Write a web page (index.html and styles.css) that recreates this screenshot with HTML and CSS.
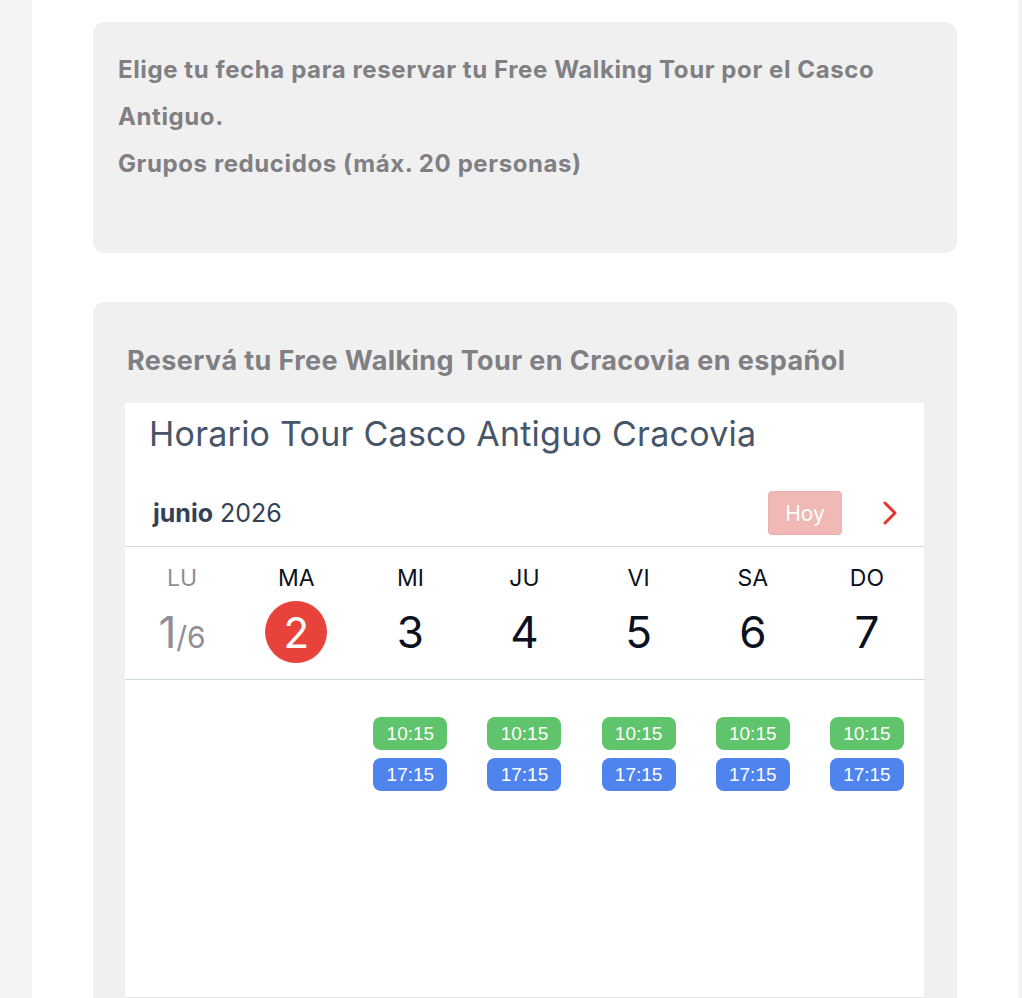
FILE: index.html
```html
<!DOCTYPE html>
<html lang="es">

<head>
  <meta charset="utf-8">
  <title>Free Walking Tour Cracovia - Reservar</title>
  <link rel="stylesheet" href="styles.css">
</head>

<body>
  <main class="page">
    <section class="card intro">
      <p>Elige tu fecha para reservar tu Free Walking Tour por el Casco Antiguo.<br>
        Grupos reducidos (máx. 20 personas)</p>
    </section>

    <section class="card booking">
      <h2>Reservá tu Free Walking Tour en Cracovia en español</h2>
      <div class="calendar">
        <h3>Horario Tour Casco Antiguo Cracovia</h3>
        <div class="toolbar">
          <div class="month"><strong>junio</strong> 2026</div>
          <button type="button" class="today">Hoy</button>
          <button type="button" class="next" aria-label="Siguiente">
            <svg width="16" height="26" viewBox="0 0 16 26"><path d="M3 3l10 10L3 23" fill="none" stroke="#e0372b" stroke-width="3" stroke-linecap="round" stroke-linejoin="round"/></svg>
          </button>
        </div>
        <div class="days">
          <div class="day past"><span class="name">LU</span><span class="num">1<small>/6</small></span></div>
          <div class="day today-day"><span class="name">MA</span><span class="num"><b>2</b></span></div>
          <div class="day"><span class="name">MI</span><span class="num">3</span></div>
          <div class="day"><span class="name">JU</span><span class="num">4</span></div>
          <div class="day"><span class="name">VI</span><span class="num">5</span></div>
          <div class="day"><span class="name">SA</span><span class="num">6</span></div>
          <div class="day"><span class="name">DO</span><span class="num">7</span></div>
        </div>
        <div class="slots">
          <div class="col"></div>
          <div class="col"></div>
          <div class="col"><a class="slot morning">10:15</a><a class="slot evening">17:15</a></div>
          <div class="col"><a class="slot morning">10:15</a><a class="slot evening">17:15</a></div>
          <div class="col"><a class="slot morning">10:15</a><a class="slot evening">17:15</a></div>
          <div class="col"><a class="slot morning">10:15</a><a class="slot evening">17:15</a></div>
          <div class="col"><a class="slot morning">10:15</a><a class="slot evening">17:15</a></div>
        </div>
      </div>
    </section>
  </main>
</body>

</html>
```

FILE: styles.css
```css
*, *::before, *::after {
  box-sizing: border-box;
}
body {
  margin: 0;
  background: #f4f4f4;
  font-family: Inter, 'Noto Sans', sans-serif;
}
.page {
  margin-left: 32px;
  width: 986px;
  height: 998px;
  background: white;
  padding: 22px 61px 0;
  overflow: hidden;
}

.card {
  background: #f0f0f0;
  border-radius: 12px;
}
.intro {
  padding: 24px 25px 66px;
}
.intro p {
  margin: 0;
  color: #808084;
  font-size: 24px;
  letter-spacing: 0.6px;
  font-weight: 700;
  line-height: 47px;
}

.booking {
  margin-top: 49px;
  padding: 41px 33px 40px 32px;
}
.booking h2 {
  margin: 0 0 24px 2px;
  color: #808084;
  font-size: 27px;
  letter-spacing: 0.4px;
  font-weight: 700;
  line-height: 36px;
}

.calendar {
  background: white;
  height: 595px;
  border-bottom: 1px solid #e3e3e3;
}
.calendar h3 {
  margin: 0;
  padding: 12px 24px 0;
  color: #475569;
  font-size: 34px;
  letter-spacing: 0.25px;
  font-weight: 400;
  line-height: 38px;
}

.toolbar {
  display: flex;
  align-items: center;
  padding: 38px 26px 11px 28px;
  border-bottom: 1px solid #cfd8e3;
}
.month {
  flex: 1;
  color: #334155;
  font-size: 25px;
}
.month strong {
  font-weight: 700;
}
.today {
  font: inherit;
  font-size: 21px;
  color: white;
  background: #f0b9b6;
  border: 1px solid #ebb0ad;
  border-radius: 4px;
  width: 74px;
  height: 44px;
  padding: 0;
}
.next {
  background: none;
  border: none;
  padding: 0;
  margin-left: 40px;
  display: flex;
}

.days {
  display: grid;
  grid-template-columns: repeat(7, 1fr);
  border-bottom: 1px solid #cfd8e3;
  padding: 18px 0 15px;
}
.day {
  display: flex;
  flex-direction: column;
  align-items: center;
  color: #0b1120;
}
.day .name {
  font-size: 23px;
  line-height: 26px;
}
.day .num {
  margin-top: 9px;
  height: 64px;
  display: flex;
  align-items: center;
  justify-content: center;
  font-size: 44px;
}
.past {
  color: #8e8e96;
}
.past small {
  font-size: 30px;
  position: relative;
  top: 5px;
}
.today-day .num b {
  font-weight: 400;
  width: 62px;
  height: 62px;
  border-radius: 50%;
  background: #e8433a;
  color: white;
  display: flex;
  align-items: center;
  justify-content: center;
  font-size: 42px;
}

.slots {
  display: grid;
  grid-template-columns: repeat(7, 1fr);
  padding-top: 37px;
}
.col {
  display: flex;
  flex-direction: column;
  align-items: center;
  gap: 8px;
}
.slot {
  width: 74px;
  height: 33px;
  border-radius: 8px;
  color: white;
  font-family: 'Liberation Sans', Arial, sans-serif;
  font-size: 19px;
  display: flex;
  align-items: center;
  justify-content: center;
}
.morning {
  background: #5fc46b;
}
.evening {
  background: #4f83ee;
}
```
